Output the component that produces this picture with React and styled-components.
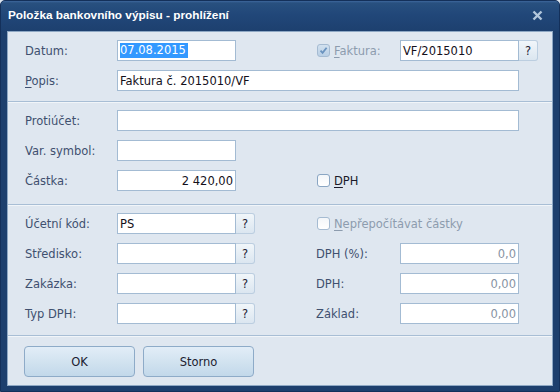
import styled, { createGlobalStyle } from 'styled-components';

const GlobalStyle = createGlobalStyle`
  html, body {
    margin: 0;
    padding: 0;
    background: #dde6ef;
  }
  body {
    font-family: "DejaVu Sans", "Liberation Sans", sans-serif;
  }
`;

const Window = styled.div`
  width: 560px;
  height: 392px;
  box-sizing: border-box;
  display: flex;
  flex-direction: column;
  background: #1d3f6d;
  border: 1px solid #14305a;
  border-radius: 5px 5px 0 0;
  padding: 0 6px 6px;
  overflow: hidden;
`;

const TitleBar = styled.div`
  height: 28px;
  flex: none;
  display: flex;
  align-items: center;
  justify-content: space-between;
  margin: 0 -6px;
  padding: 0 16px 2px 7px;
  background: linear-gradient(#3d679c 0, #28507f 2px, #214779 45%, #1d406f 100%);
  color: #fff;
  font-family: "Liberation Sans", Arial, sans-serif;
  font-weight: bold;
  font-size: 11.8px;
`;

const Close = styled.svg`
  width: 11px;
  height: 11px;
`;

const Client = styled.div`
  flex: 1;
  background: #dfe7f0;
  border: 1px solid #8ea8c4;
  display: flex;
  flex-direction: column;
`;

const Section = styled.div`
  display: grid;
  grid-template-columns: 92px 119px 19px 61px 84px 119px 19px;
  grid-auto-rows: 21px;
  row-gap: 9px;
  padding: ${p => p.$top}px 0 ${p => p.$bottom}px 17px;
`;

const Divider = styled.div`
  height: 1px;
  background: #a8bed5;
  box-shadow: 0 1px 0 #f1f5f9;
`;

const Label = styled.div`
  grid-column: ${p => p.$col || 1} / span ${p => p.$span || 1};
  display: flex;
  align-items: center;
  font-size: 11.5px;
  color: ${p => (p.$disabled ? '#8d9cae' : p.$dark ? '#1a1a2a' : '#40506f')};
  white-space: nowrap;
  gap: 4px;

  u {
    text-decoration: underline;
    text-underline-offset: 2px;
  }
`;

const Field = styled.div`
  grid-column: ${p => p.$col || 2} / span ${p => p.$span || 1};
  box-sizing: border-box;
  background: #fff;
  border: 1px solid #a3bbd3;
  display: flex;
  align-items: center;
  justify-content: ${p => (p.$right ? 'flex-end' : 'flex-start')};
  padding: 0 2px;
  font-size: 11.5px;
  color: ${p => (p.$muted ? '#8793a3' : '#14101a')};
  white-space: nowrap;
  overflow: hidden;
`;

const Selected = styled.span`
  background: #3399ff;
  color: #fff;
  line-height: 15px;
  padding-right: 2px;
`;

const Help = styled.div`
  grid-column: ${p => p.$col || 3};
  box-sizing: border-box;
  border: 1px solid #bccee0;
  border-left: none;
  border-radius: 0 3px 3px 0;
  background: linear-gradient(#f1f6fa, #dbe6f0);
  display: flex;
  align-items: center;
  justify-content: center;
  font-size: 11.5px;
  color: #202030;
`;

const Box = styled.span`
  width: 13px;
  height: 13px;
  box-sizing: border-box;
  flex: none;
  border: 1px solid ${p => (p.$disabled ? '#a5bbd2' : '#8aa6c3')};
  border-radius: 3px;
  background: ${p => (p.$checked ? 'linear-gradient(#d2e1ef, #b9cfe5)' : 'linear-gradient(#f3f6f9, #ffffff)')};
  display: flex;
  align-items: center;
  justify-content: center;
  margin-left: 1px;
`;

const Footer = styled.div`
  display: flex;
  gap: 8px;
  padding: 10px 0 8px 16px;
`;

const Button = styled.div`
  width: 111px;
  height: 31px;
  box-sizing: border-box;
  border: 1px solid #8eabc8;
  border-radius: 4px;
  background: linear-gradient(#e2edf7, #d2e3f0 50%, #c2d8ea);
  display: flex;
  align-items: center;
  justify-content: center;
  font-size: 11.5px;
  color: #202030;
`;

function Check({ checked, disabled }) {
  return (
    <Box $checked={checked} $disabled={disabled}>
      {checked && (
        <svg width="9" height="9" viewBox="0 0 9 9">
          <path d="M1.5 4.6 L3.6 6.8 L7.6 1.8" fill="none" stroke="#6a93bf" strokeWidth="1.8" />
        </svg>
      )}
    </Box>
  );
}

export default function App() {
  return (
    <>
      <GlobalStyle />
      <Window>
        <TitleBar>
          <span>Položka bankovního výpisu - prohlížení</span>
          <Close viewBox="0 0 11 11">
            <path d="M1.5 1.5 L9.5 9.5 M9.5 1.5 L1.5 9.5" stroke="#b3c7dc" strokeWidth="2.4" />
          </Close>
        </TitleBar>
        <Client>
          <Section $top={8} $bottom={10}>
            <Label>Datum:</Label>
            <Field><Selected>07.08.2015</Selected></Field>
            <Label $col={5} $disabled>
              <Check checked disabled />
              <span><u>F</u>aktura:</span>
            </Label>
            <Field $col={6}>VF/2015010</Field>
            <Help $col={7}>?</Help>

            <Label><span><u>P</u>opis:</span></Label>
            <Field $span={5}>Faktura č. 2015010/VF</Field>
          </Section>
          <Divider />
          <Section $top={8} $bottom={13}>
            <Label>Protiúčet:</Label>
            <Field $span={5} />

            <Label>Var. symbol:</Label>
            <Field />

            <Label>Částka:</Label>
            <Field $right>2 420,00</Field>
            <Label $col={5} $dark>
              <Check />
              <span><u>D</u>PH</span>
            </Label>
          </Section>
          <Divider />
          <Section $top={8} $bottom={11}>
            <Label>Účetní kód:</Label>
            <Field>PS</Field>
            <Help>?</Help>
            <Label $col={5} $span={3} $disabled>
              <Check disabled />
              <span><u>N</u>epřepočítávat částky</span>
            </Label>

            <Label>Středisko:</Label>
            <Field />
            <Help>?</Help>
            <Label $col={5}>DPH (%):</Label>
            <Field $col={6} $right $muted>0,0</Field>

            <Label>Zakázka:</Label>
            <Field />
            <Help>?</Help>
            <Label $col={5}>DPH:</Label>
            <Field $col={6} $right $muted>0,00</Field>

            <Label>Typ DPH:</Label>
            <Field />
            <Help>?</Help>
            <Label $col={5}>Základ:</Label>
            <Field $col={6} $right $muted>0,00</Field>
          </Section>
          <Divider />
          <Footer>
            <Button>OK</Button>
            <Button>Storno</Button>
          </Footer>
        </Client>
      </Window>
    </>
  );
}
